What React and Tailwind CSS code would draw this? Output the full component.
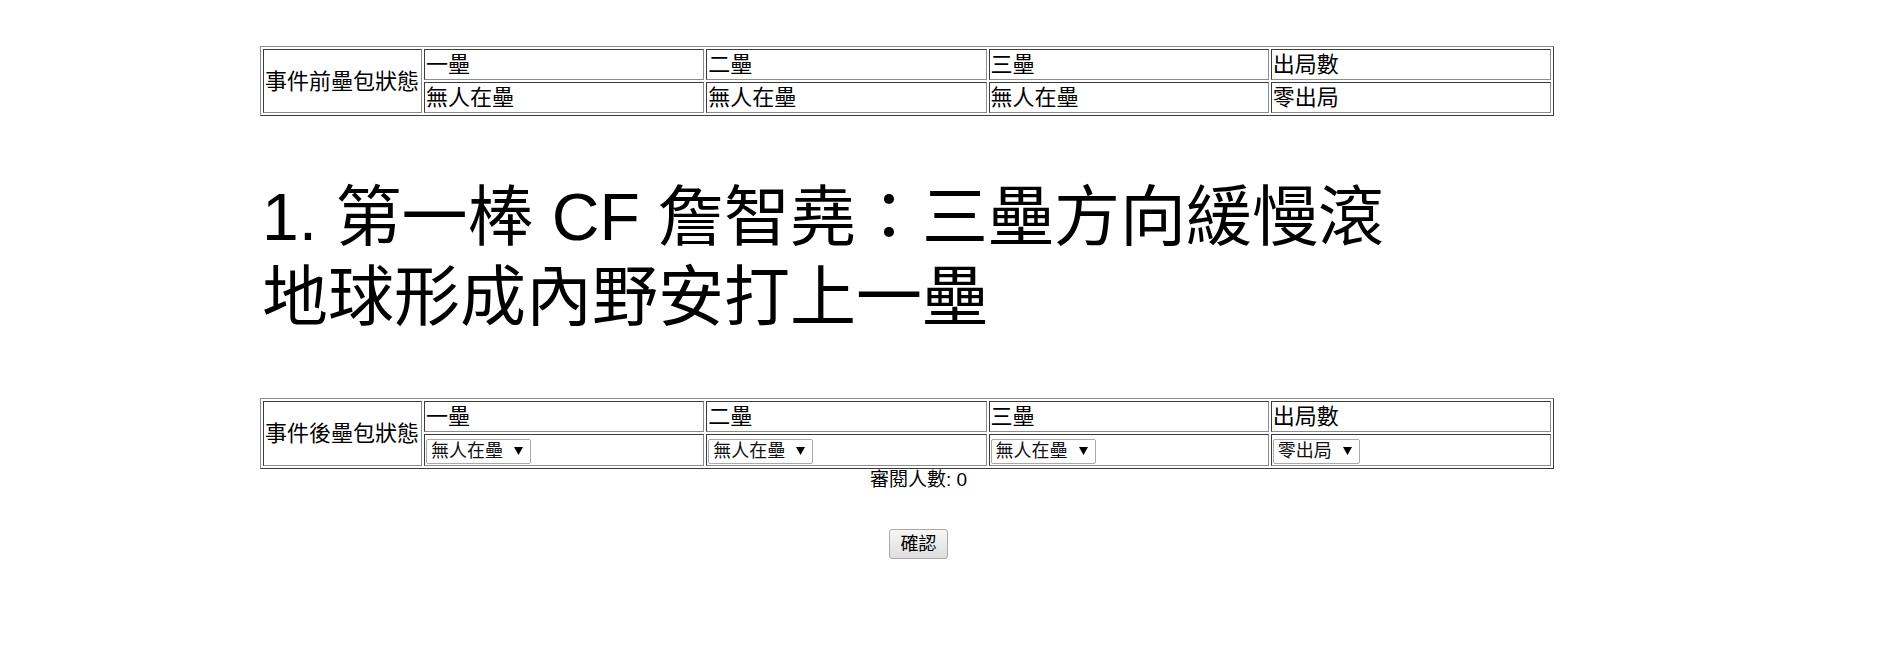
import React from "react";

const outer =
  "border border-t-[#8c8c8c] border-l-[#8c8c8c] border-r-[#3c3c3c] border-b-[#3c3c3c]";
const cell =
  "border border-t-[#3c3c3c] border-l-[#3c3c3c] border-r-[#8c8c8c] border-b-[#8c8c8c] p-px text-left align-middle";

function Arrow() {
  return (
    <svg
      className="pointer-events-none absolute right-[8px] top-1/2 -translate-y-1/2"
      width="9"
      height="8"
      viewBox="0 0 9 8"
    >
      <polygon points="0,0 9,0 4.5,8" fill="#000" />
    </svg>
  );
}

function Select({ value }) {
  return (
    <span className="relative inline-block align-middle">
      <select
        defaultValue={value}
        className="block h-[25px] appearance-none rounded-[2px] border border-[#a9a9a9] bg-white pl-[4px] pr-[27px] text-[18px] leading-[23px] text-[#111] outline-none"
      >
        <option>{value}</option>
      </select>
      <Arrow />
    </span>
  );
}

function BaseTable({ label, values, selects }) {
  const heads = ["一壘", "二壘", "三壘", "出局數"];
  return (
    <table
      className={`w-[1294px] table-fixed border-separate border-spacing-[2px] text-[22px] leading-[27px] text-black ${outer}`}
    >
      <tbody>
        <tr>
          <td rowSpan={2} className={`${cell} w-[159px]`}>
            {label}
          </td>
          {heads.map((h) => (
            <td key={h} className={`${cell} w-[280px]`}>
              {h}
            </td>
          ))}
        </tr>
        <tr>
          {values.map((v, i) => (
            <td key={i} className={cell}>
              {selects ? <Select value={v} /> : v}
            </td>
          ))}
        </tr>
      </tbody>
    </table>
  );
}

export default function App() {
  const vals = ["無人在壘", "無人在壘", "無人在壘", "零出局"];
  return (
    <div className="min-h-[671px] w-full bg-white font-['Liberation_Sans','Noto_Sans_CJK_TC',sans-serif] text-black">
      <div className="ml-[260px] flex w-[1317px] flex-col pt-[46px]">
        <BaseTable label="事件前壘包狀態" values={vals} />
        <h1 className="mt-[61px] ml-[2px] w-[1160px] text-[66px] font-normal leading-[80px]">
          1. 第一棒 CF 詹智堯：三壘方向緩慢滾地球形成內野安打上一壘
        </h1>
        <div className="mt-[61px]">
          <BaseTable label="事件後壘包狀態" values={vals} selects />
        </div>
        <div className="text-center text-[19px] leading-[22px]">審閱人數: 0</div>
        <div className="mt-[38px] flex justify-center">
          <button className="h-[30px] w-[59px] rounded-[3px] border border-[#a9a9a9] bg-linear-to-b from-[#f6f6f6] to-[#dedede] text-[18px] leading-[26px] text-black">
            確認
          </button>
        </div>
      </div>
    </div>
  );
}
